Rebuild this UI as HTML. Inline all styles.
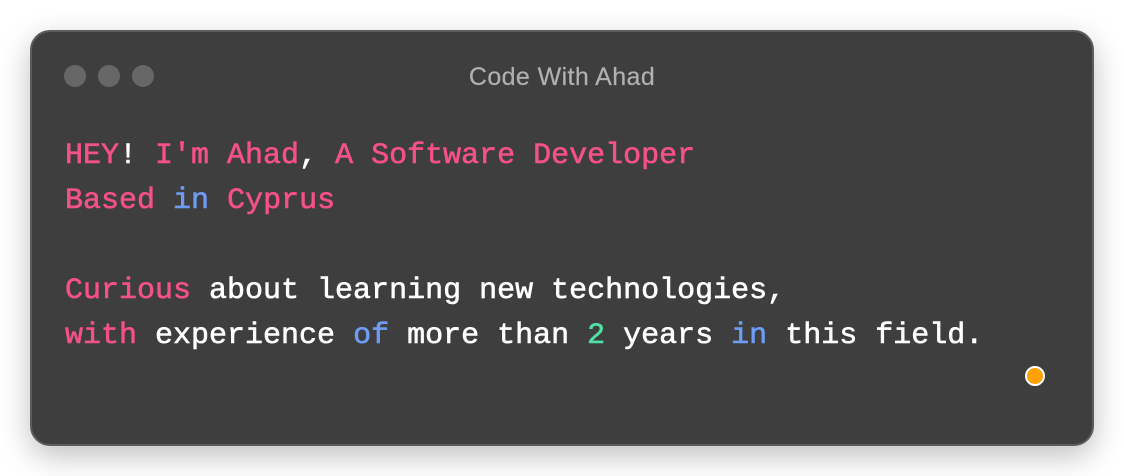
<!DOCTYPE html>
<html><head><style>
html,body{margin:0;padding:0;background:#fff;width:1124px;height:476px;overflow:hidden}
.win{position:absolute;left:30px;top:30px;width:1060px;height:412px;background:#3e3e3e;border:2px solid #5c5c5c;border-radius:20px;box-shadow:0 10px 30px rgba(0,0,0,0.25)}
.dot{position:absolute;top:33px;width:22px;height:22px;border-radius:50%;background:#676767}
.title{position:absolute;left:0;right:0;top:31px;text-align:center;font:25px "Liberation Sans",sans-serif;color:#b0b0b0;letter-spacing:0.4px;-webkit-text-stroke:0.2px #b0b0b0}
.code{position:absolute;left:33px;top:102px;font:30px/45px "Liberation Mono",monospace;color:#fff;white-space:pre;-webkit-text-stroke:0.6px currentColor}
.p{color:#f5508a}.b{color:#6e9cf5}.g{color:#4fe0a6}
.or{position:absolute;left:993px;top:334px;width:16px;height:16px;border-radius:50%;background:#ffa000;border:2px solid #fff}
</style></head><body>
<div class="win">
<div class="dot" style="left:32px"></div><div class="dot" style="left:66px"></div><div class="dot" style="left:100px"></div>
<div class="title">Code With Ahad</div>
<div class="code"><span class="p">HEY</span>! <span class="p">I'm Ahad</span>, <span class="p">A Software Developer</span>
<span class="p">Based</span> <span class="b">in</span> <span class="p">Cyprus</span>

<span class="p">Curious</span> about learning new technologies,
<span class="p">with</span> experience <span class="b">of</span> more than <span class="g">2</span> years <span class="b">in</span> this field.</div>
<div class="or"></div>
</div>
</body></html>
